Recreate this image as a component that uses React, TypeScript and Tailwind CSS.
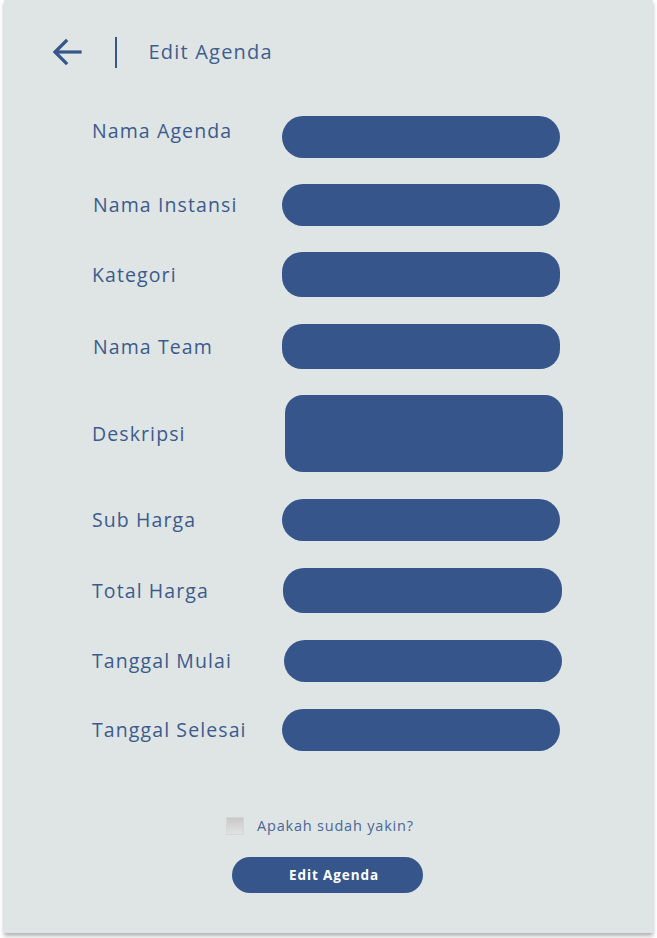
const fields = [
  { label: "Nama Agenda", row: "mt-[116px] h-[42px]", field: "ml-0 w-[278px] rounded-[21px]", lab: "-translate-y-[6px] pl-[88px]" },
  { label: "Nama Instansi", row: "mt-[26px] h-[42px]", field: "ml-0 w-[278px] rounded-[21px]", lab: "pl-[89px]" },
  { label: "Kategori", row: "mt-[26px] h-[45px]", field: "ml-0 w-[278px] rounded-[20px]", lab: "pl-[88px]" },
  { label: "Nama Team", row: "mt-[27px] h-[45px]", field: "ml-0 w-[278px] rounded-[20px]", lab: "pl-[89px]" },
  { label: "Deskripsi", row: "mt-[26px] h-[77px]", field: "ml-[3px] w-[278px] rounded-[18px]", lab: "pl-[88px]" },
  { label: "Sub Harga", row: "mt-[27px] h-[42px]", field: "ml-0 w-[278px] rounded-[21px]", lab: "pl-[88px]" },
  { label: "Total Harga", row: "mt-[27px] h-[45px]", field: "ml-[1px] w-[279px] rounded-[21px]", lab: "pl-[88px]" },
  { label: "Tanggal Mulai", row: "mt-[27px] h-[42px]", field: "ml-[2px] w-[278px] rounded-[21px]", lab: "pl-[88px]" },
  { label: "Tanggal Selesai", row: "mt-[27px] h-[42px]", field: "ml-0 w-[278px] rounded-[21px]", lab: "pl-[88px]" },
];

function BackArrow() {
  return (
    <svg width="30" height="28" viewBox="0 0 30 28" fill="none" stroke="#36558a" strokeWidth="3.2" strokeLinecap="square">
      <path d="M28 14H4" />
      <path d="M14 3L3 14l11 11" />
    </svg>
  );
}

export default function App() {
  return (
    <div className="min-h-screen bg-white" style={{ fontFamily: '"Open Sans", "DejaVu Sans", sans-serif' }}>
      <div className="ml-[4px] flex h-[933px] w-[649px] flex-col bg-[#dfe5e5] shadow-[0_3px_4px_rgba(0,0,0,0.3)]">
        <header className="flex h-[104px] items-center">
          <div className="ml-[48px] flex h-[30px] w-[30px] items-center">
            <BackArrow />
          </div>
          <div className="ml-[33px] h-[31px] w-[1.5px] bg-[#36558a]" />
          <span className="ml-[32px] text-[20px] tracking-[1.2px] text-[#3f5d8e]">Edit Agenda</span>
        </header>

        <div className="-mt-[104px] flex flex-col">
          {fields.map((f) => (
            <div key={f.label} className={`flex items-center ${f.row}`}>
              <div className={`w-[278px] text-[19.5px] tracking-[1.1px] text-[#3c5b8d] ${f.lab}`}>{f.label}</div>
              <div className={`h-full bg-[#36558a] ${f.field}`} />
            </div>
          ))}
        </div>

        <label className="mt-[64px] flex items-center pl-[222px]">
          <span className="h-[18px] w-[18px] border border-[#d6d6d6] bg-gradient-to-b from-[#c9c9c9] to-[#e2e2e2]" />
          <span className="ml-[13px] text-[14.5px] tracking-[0.8px] text-[#4a6797]">Apakah sudah yakin?</span>
        </label>

        <button className="ml-[228px] mt-[20px] h-[36px] w-[191px] rounded-full bg-[#36558a] pl-[13px] text-[13.5px] font-bold tracking-[0.9px] text-white">
          Edit Agenda
        </button>
      </div>
    </div>
  );
}
